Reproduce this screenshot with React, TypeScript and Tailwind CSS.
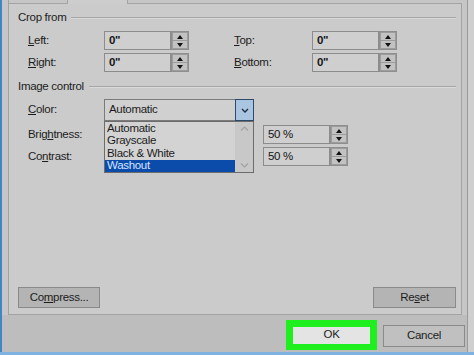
import React from "react";

function Spinner() {
	return (
		<div className="flex w-[18px] flex-col gap-[1px] border border-[#8e8e8e] bg-[#9c9c9c] p-[1px]">
			<div className="flex flex-1 items-center justify-center bg-[#c2c2c2]">
				<svg width="6" height="4" viewBox="0 0 6 4">
					<path d="M0 4 L3 0 L6 4 Z" fill="#111" />
				</svg>
			</div>
			<div className="flex flex-1 items-center justify-center bg-[#c2c2c2]">
				<svg width="6" height="4" viewBox="0 0 6 4">
					<path d="M0 0 L6 0 L3 4 Z" fill="#111" />
				</svg>
			</div>
		</div>
	);
}

function NumField({ value, bold = false }: { value: string; bold?: boolean }) {
	return (
		<div className="flex h-[19px]">
			<div
				className={`flex w-[67px] items-center border border-[#8c8c8c] bg-[#cfcfcf] pl-[4px] text-[#141414] ${
					bold ? "font-bold" : ""
				}`}
			>
				{value}
			</div>
			<Spinner />
		</div>
	);
}

function GroupHeader({ title }: { title: string }) {
	return (
		<div className="flex h-[14px] items-center pl-[9px] pr-[5px]">
			<span className="whitespace-nowrap">{title}</span>
			<div className="ml-[5px] h-[2px] flex-1 border-t border-b border-t-[#a6a6a6] border-b-[#d9d9d9]" />
		</div>
	);
}

function Button({ children, className = "" }: { children: React.ReactNode; className?: string }) {
	return (
		<div
			className={`flex items-center justify-center border border-[#8a8a8a] bg-[#b4b4b4] ${className}`}
		>
			{children}
		</div>
	);
}

export default function App() {
	const items = ["Automatic", "Grayscale", "Black & White", "Washout"];

	return (
		<div className="flex h-[355px] w-[474px] flex-col overflow-hidden bg-[#c6c6c6] font-['Liberation_Sans',Arial,sans-serif] text-[11.5px] leading-none tracking-[-0.3px] text-[#1c1c1c]">
			<div className="flex h-[352px]">
				<div className="w-[2px] bg-[#3f86c8]" />

				<div className="flex w-[465px] flex-col">
					{/* tabs */}
					<div className="ml-[6px] flex h-[4px] w-[454px]">
						<div className="w-[59px] border-b border-l border-[#a3a3a3]" />
						<div className="w-[61px] border-x border-[#a3a3a3] bg-[#cdcdcd]" />
						<div className="flex-1 border-b border-[#a3a3a3]" />
					</div>

					{/* panel */}
					<div className="ml-[6px] flex h-[311px] w-[454px] flex-col border-x border-b border-[#a3a3a3] bg-[#cbcbcb] pt-[7px] pb-[6px]">
						<GroupHeader title="Crop from" />

						<div className="mt-[6px] flex items-center pl-[19px]">
							<span className="w-[76px]">
								<u>L</u>eft:
							</span>
							<NumField value={'0"'} bold />
							<span className="ml-[45px] w-[78px]">
								<u>T</u>op:
							</span>
							<NumField value={'0"'} bold />
						</div>
						<div className="mt-[3px] flex items-center pl-[19px]">
							<span className="w-[76px]">
								<u>R</u>ight:
							</span>
							<NumField value={'0"'} bold />
							<span className="ml-[45px] w-[78px]">
								<u>B</u>ottom:
							</span>
							<NumField value={'0"'} bold />
						</div>

						<div className="mt-[8px]">
							<GroupHeader title="Image control" />
						</div>

						<div className="mt-[5px] flex h-[22px] items-center pl-[19px]">
							<span className="w-[76px]">
								<u>C</u>olor:
							</span>
							<div className="relative z-10 flex h-[22px] w-[150px] border border-[#7a7a7a] bg-[#d0d0d0]">
								<span className="flex flex-1 items-center pl-[4px]">Automatic</span>
								<div className="-my-[1px] -mr-[1px] flex w-[19px] items-center justify-center border border-[#2c4a6a] bg-[#a9c5e1]">
									<svg width="8" height="5" viewBox="0 0 8 5">
										<path d="M1 1 L4 4 L7 1" fill="none" stroke="#1b2a3a" strokeWidth="1.3" />
									</svg>
								</div>

								<div className="absolute top-[21px] left-[-1px] flex h-[52px] w-[150px] border border-[#6c6c6c] bg-[#d3d3d3]">
									<div className="flex flex-1 flex-col">
										{items.map((item) => (
											<div
												key={item}
												className={`flex h-[12.5px] items-center pl-[2px] ${
													item === "Washout" ? "bg-[#0b4cab] text-[#d6e4ff]" : ""
												}`}
											>
												{item}
											</div>
										))}
									</div>
									<div className="flex w-[18px] flex-col items-center justify-between bg-[#c8c8c8] py-[4px]">
										<svg width="9" height="5" viewBox="0 0 9 5">
											<path d="M1 4.5 L4.5 1 L8 4.5" fill="none" stroke="#a2a2a2" strokeWidth="1.2" />
										</svg>
										<svg width="9" height="5" viewBox="0 0 9 5">
											<path d="M1 0.5 L4.5 4 L8 0.5" fill="none" stroke="#a2a2a2" strokeWidth="1.2" />
										</svg>
									</div>
								</div>
							</div>
						</div>

						<div className="mt-[4px] flex items-center pl-[19px]">
							<span className="w-[76px]">
								Brig<u>h</u>tness:
							</span>
							<div className="w-[159px]" />
							<NumField value="50 %" />
						</div>
						<div className="mt-[3px] flex items-center pl-[19px]">
							<span className="w-[76px]">
								Co<u>n</u>trast:
							</span>
							<div className="w-[159px]" />
							<NumField value="50 %" />
						</div>

						<div className="flex-1" />

						<div className="flex justify-between pl-[9px] pr-[5px]">
							<Button className="h-[21px] w-[82px]">
								Co<u>m</u>press...
							</Button>
							<Button className="h-[21px] w-[83px]">
								Re<u>s</u>et
							</Button>
						</div>
					</div>

					{/* bottom buttons */}
					<div className="flex flex-1 items-start justify-end gap-[6px] bg-[#bdbdbd] pr-[2px]">
						<div className="mt-[5px] flex h-[30px] w-[91px] items-center justify-center bg-[#1fee1f]">
							<div className="flex h-[17px] w-[77px] items-center justify-center bg-[#e4e4e4]">OK</div>
						</div>
						<div className="mt-[10px] flex h-[22px] w-[82px] items-center justify-center border border-[#8a8a8a] bg-[#c0c0c0]">
							Cancel
						</div>
					</div>
				</div>

				<div className="flex-1 border-l border-[#9a9a9a] bg-[#cfcfcf]" />
			</div>
			<div className="h-[3px] bg-[#7fb2e0]" />
		</div>
	);
}
